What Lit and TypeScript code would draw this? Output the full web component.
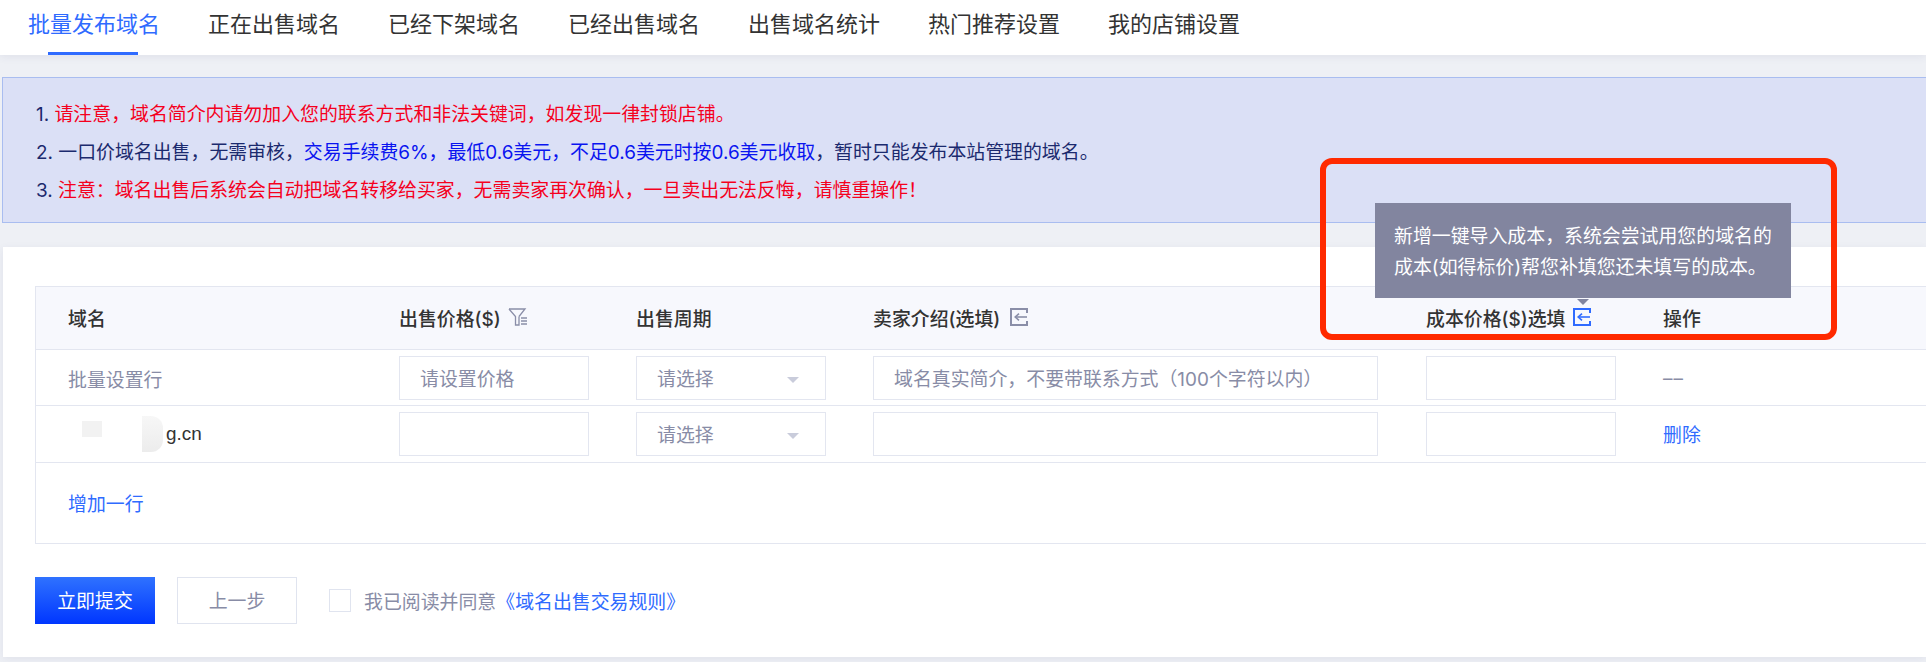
import { html, css, LitElement, svg } from 'lit';
import { customElement } from 'lit/decorators.js';

const tabs = ['批量发布域名', '正在出售域名', '已经下架域名', '已经出售域名', '出售域名统计', '热门推荐设置', '我的店铺设置'];

const importIcon = (cls: string) => html`
  <svg class="icon ${cls}" width="18" height="18" viewBox="0 0 18 18" fill="none" stroke="currentColor" stroke-width="2">
    ${svg`<path d="M17 5V1H1v16h16v-4" />`}
    ${svg`<path d="M17 9H5.5" stroke-width="1.6" />`}
    ${svg`<path d="M9 5.6 5.2 9 9 12.4" stroke-width="1.6" />`}
  </svg>
`;

@customElement('app-root')
export class AppRoot extends LitElement {
  static styles = css`
    :host {
      display: block;
      position: relative;
      width: 1926px;
      height: 662px;
      overflow: hidden;
      background: #eef0f5;
      color: #333;
      font-family: Inter, 'Noto Sans CJK SC', sans-serif;
      font-size: 18.9px;
    }

    .tabs {
      display: flex;
      gap: 48px;
      height: 55px;
      padding-left: 28px;
      background: #fff;
      box-shadow: 0 2px 8px rgba(60, 70, 110, 0.08);
      position: relative;
    }

    .tab {
      position: relative;
      width: 132px;
      font-size: 22px;
      line-height: 49px;
      white-space: nowrap;
      color: #333;
    }

    .tab.active {
      color: #2f6bff;
    }

    .tab.active::after {
      content: '';
      position: absolute;
      left: 20px;
      bottom: 0;
      width: 90px;
      height: 3px;
      background: #2f6bff;
    }

    .notice {
      margin: 22px 0 0 2px;
      padding: 18px 0 12px 33px;
      background: #dbe0f6;
      border: 1px solid #a9bdf0;
      border-right: none;
      color: #1b2a6e;
      line-height: 38px;
      white-space: nowrap;
    }

    .red {
      color: #f5001e;
    }

    .blue {
      color: #0a14f0;
    }

    .card {
      margin: 24px 0 0 3px;
      padding: 39px 0 33px 32px;
      background: #fff;
      box-shadow: 0 2px 8px rgba(60, 70, 110, 0.08);
    }

    .table {
      border: 1px solid #e3e6f0;
      border-right: none;
    }

    .row {
      display: grid;
      grid-template-columns: 331px 237px 237px 553px 237px 1fr;
      align-items: center;
      padding-left: 32px;
      border-bottom: 1px solid #e3e6f0;
    }

    .head {
      height: 60px;
      padding-bottom: 2px;
      background: #f7f8fd;
      font-weight: 500;
      color: #333;
    }

    .head > div {
      display: flex;
      align-items: center;
      gap: 7px;
    }

    .head .import {
      gap: 10px;
    }

    .head .import.tight {
      gap: 8px;
    }

    .batch {
      height: 54px;
      padding-top: 1px;
    }

    .item {
      height: 56px;
    }

    .muted {
      color: #888ca6;
    }

    .field {
      box-sizing: border-box;
      height: 44px;
      padding: 1px 0 0 20px;
      border: 1px solid #e3e6f0;
      color: #888ca6;
      line-height: 44px;
      white-space: nowrap;
      position: relative;
    }

    .w-s {
      width: 190px;
    }

    .w-l {
      width: 505px;
    }

    .select::after {
      content: '';
      position: absolute;
      right: 26px;
      top: 20px;
      border: 6px solid transparent;
      border-top: 6px solid #c9ccdb;
      border-bottom: none;
    }

    .domain {
      display: flex;
      align-items: center;
      height: 40px;
      color: #333;
      font-family: 'Liberation Sans', sans-serif;
    }

    .blob-a {
      width: 20px;
      height: 16px;
      margin: 0 0 10px 14px;
      background: #f2f2f2;
    }

    .blob-b {
      width: 21px;
      height: 36px;
      margin-left: 40px;
      margin-right: 3px;
      border-radius: 0 12px 12px 0;
      background: linear-gradient(#f7f7f7, #ececec);
    }

    .link {
      color: #2f6bff;
    }

    .del {
      margin-top: -2px;
    }

    .dash {
      letter-spacing: 1px;
      line-height: 22px;
      padding-top: 2px;
    }

    .add {
      height: 80px;
      padding-left: 32px;
      line-height: 84px;
    }

    .actions {
      display: flex;
      align-items: center;
      margin-top: 33px;
    }

    .btn {
      box-sizing: border-box;
      width: 120px;
      height: 47px;
      line-height: 47px;
      text-align: center;
    }

    .submit {
      background: linear-gradient(#2f72ff, #0036ff);
      color: #fff;
      line-height: 49px;
    }

    .back {
      margin-left: 22px;
      border: 1px solid #e0e4ef;
      color: #888ca6;
    }

    .check {
      box-sizing: border-box;
      width: 22px;
      height: 23px;
      margin: 0 13px 0 32px;
      border: 1px solid #e0e4ef;
    }

    .icon {
      flex: none;
    }

    .grey {
      color: #8a8ea8;
    }

    .bright {
      color: #2f6bff;
    }

    .tip {
      position: absolute;
      left: 1375px;
      top: 203px;
      box-sizing: border-box;
      width: 416px;
      height: 95px;
      padding: 18px 0 0 19px;
      background: #82859f;
      color: #fff;
      line-height: 31px;
      white-space: nowrap;
    }

    .tip::after {
      content: '';
      position: absolute;
      left: 202px;
      top: 100%;
      margin-top: 1px;
      border: 6px solid transparent;
      border-top: 6px solid #82859f;
      border-bottom: none;
    }

    .mark {
      position: absolute;
      left: 1320px;
      top: 158px;
      box-sizing: border-box;
      width: 517px;
      height: 182px;
      border: 6px solid #ff2a00;
      border-radius: 12px;
    }
  `;

  protected render() {
    return html`
      <nav class="tabs">
        ${tabs.map((t, i) => html`<div class="tab ${i === 0 ? 'active' : ''}">${t}</div>`)}
      </nav>

      <section class="notice">
        <div>1. <span class="red">请注意，域名简介内请勿加入您的联系方式和非法关键词，如发现一律封锁店铺。</span></div>
        <div>2. 一口价域名出售，无需审核，<span class="blue">交易手续费6%，最低0.6美元，不足0.6美元时按0.6美元收取</span>，暂时只能发布本站管理的域名。</div>
        <div>3. <span class="red">注意：域名出售后系统会自动把域名转移给买家，无需卖家再次确认，一旦卖出无法反悔，请慎重操作！</span></div>
      </section>

      <section class="card">
        <div class="table">
          <div class="row head">
            <div>域名</div>
            <div>
              出售价格($)
              <svg class="icon grey" width="20" height="18" viewBox="0 0 20 18" fill="none" stroke="currentColor" stroke-width="1.3">
                <path d="M1 1h16l-6 7.5" />
                <path d="M1 1l6.5 7.5V17H11V8.5" />
                <path d="M13 10h6M13 13h6M13 16h6" />
              </svg>
            </div>
            <div>出售周期</div>
            <div class="import">卖家介绍(选填) ${importIcon('grey')}</div>
            <div class="import tight">成本价格($)选填 ${importIcon('bright')}</div>
            <div>操作</div>
          </div>

          <div class="row batch">
            <div class="muted">批量设置行</div>
            <div class="field w-s">请设置价格</div>
            <div class="field w-s select">请选择</div>
            <div class="field w-l">域名真实简介，不要带联系方式（100个字符以内）</div>
            <div class="field w-s"></div>
            <div class="muted dash">––</div>
          </div>

          <div class="row item">
            <div class="domain"><span class="blob-a"></span><span class="blob-b"></span>g.cn</div>
            <div class="field w-s"></div>
            <div class="field w-s select">请选择</div>
            <div class="field w-l"></div>
            <div class="field w-s"></div>
            <div class="link del">删除</div>
          </div>

          <div class="add link">增加一行</div>
        </div>

        <div class="actions">
          <div class="btn submit">立即提交</div>
          <div class="btn back">上一步</div>
          <div class="check"></div>
          <span class="muted">我已阅读并同意</span><span class="link">《域名出售交易规则》</span>
        </div>
      </section>

      <div class="tip">
        <div>新增一键导入成本，系统会尝试用您的域名的</div>
        <div>成本(如得标价)帮您补填您还未填写的成本。</div>
      </div>
      <div class="mark"></div>
    `;
  }
}
